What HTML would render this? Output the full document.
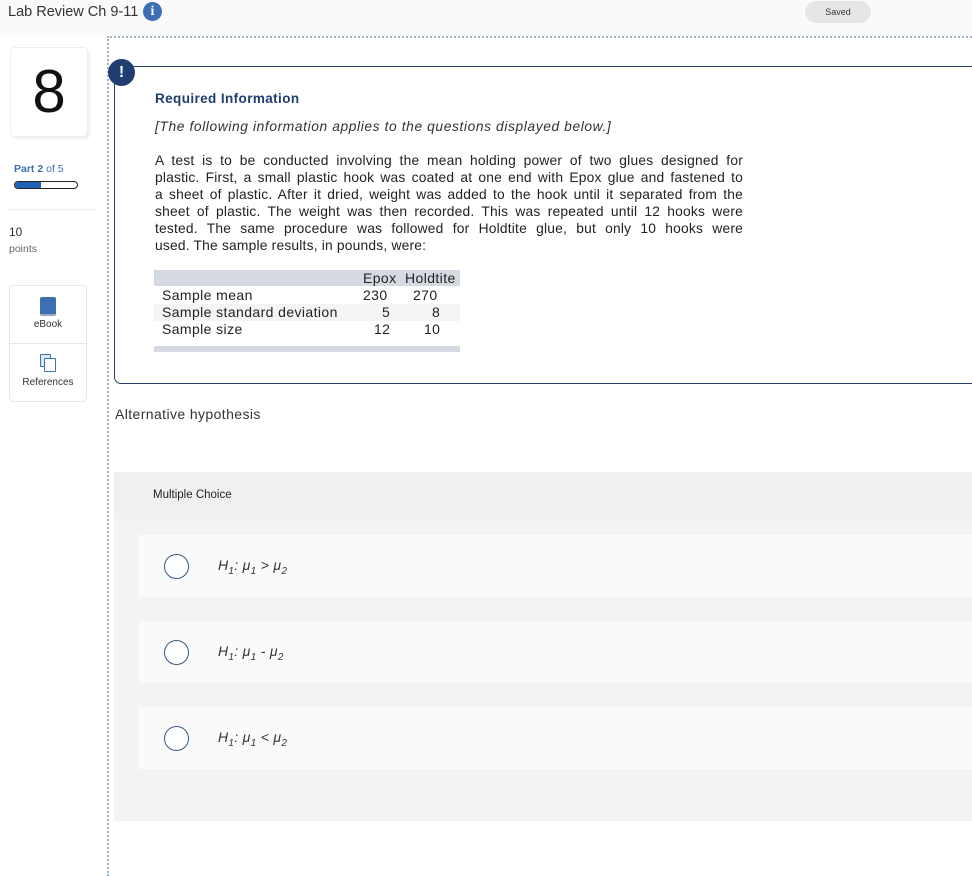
<!DOCTYPE html>
<html><head><meta charset="utf-8"><style>
*{margin:0;padding:0;box-sizing:border-box}
body{width:972px;height:875px;background:#fff;font-family:"Liberation Sans",sans-serif;color:#222;position:relative;overflow:hidden}
.a{position:absolute}
.hdr{left:0;top:0;width:972px;height:36px;background:#fafafa}
.body{font-size:13.8px;line-height:17px;color:#222;letter-spacing:.2px}
.body div{text-align:justify;text-align-last:justify;white-space:nowrap;height:17px}
.body div.l{text-align-last:left}
.opt{left:138px;width:834px;height:62px;background:#fafafa}
.rad{left:26px;top:19px;width:25px;height:25px;border:1.5px solid #3a5a80;border-radius:50%;background:#fff}
.ot{left:80px;top:22px;font-style:italic;font-size:14px;letter-spacing:.3px;color:#333}
.ot sub{font-size:10px}
.tb span{white-space:nowrap}
</style></head><body>
<div class="a hdr"></div>
<div class="a" style="left:8px;top:4px;font-size:14.5px;color:#333">Lab Review Ch 9-11</div>
<div class="a" style="left:143px;top:2px;width:19px;height:19px;border-radius:50%;background:#3c6fb6;color:#fff;font:bold 14px 'Liberation Serif',serif;text-align:center;line-height:19px">i</div>
<div class="a" style="left:805px;top:1px;width:66px;height:22px;border-radius:11px;background:#e6e6e6;font-size:9px;text-align:center;line-height:22px;color:#333">Saved</div>
<div class="a" style="left:107px;top:36px;width:865px;border-top:2px dotted #9fb2c6"></div>
<div class="a" style="left:107px;top:36px;height:840px;border-left:2px dotted #9fb2c6"></div>

<div class="a" style="left:10px;top:47px;width:78px;height:90px;border:1px solid #eee;border-radius:5px;box-shadow:2px 2px 2px #eee;font-size:60px;text-align:center;line-height:88px;color:#111">8</div>
<div class="a" style="left:14px;top:163px;font-size:10.5px;color:#3c6fb6"><b>Part 2</b> of 5</div>
<div class="a" style="left:14px;top:181px;width:64px;height:8px;border:1.5px solid #222;border-radius:4px;overflow:hidden"><div style="width:26px;height:100%;background:#1d62b5"></div></div>
<div class="a" style="left:8px;top:209px;width:88px;border-top:1px solid #eee"></div>
<div class="a" style="left:9px;top:225px;font-size:12px;color:#333">10</div>
<div class="a" style="left:9px;top:243px;font-size:10.5px;color:#666">points</div>
<div class="a" style="left:9px;top:285px;width:78px;height:117px;border:1px solid #e8e8e8;border-radius:4px"></div>
<div class="a" style="left:9px;top:343px;width:78px;border-top:1px solid #e8e8e8"></div>
<div class="a" style="left:40px;top:297px;width:16px;height:19px;background:#3c6fb6;border-radius:2px;border-bottom:2px solid #9ab"></div>
<div class="a" style="left:9px;top:319px;width:78px;text-align:center;font-size:10px;color:#333">eBook</div>
<div class="a" style="left:40px;top:354px;width:11px;height:13px;border:1.5px solid #3c6fb6;border-radius:1px;background:#dde8f5"></div>
<div class="a" style="left:44px;top:358px;width:12px;height:14px;border:1.5px solid #3c6fb6;border-radius:1px;background:#fff"></div>
<div class="a" style="left:9px;top:377px;width:78px;text-align:center;font-size:10px;color:#333">References</div>

<div class="a" style="left:114px;top:66px;width:870px;height:318px;border:1.5px solid #2a3f66;border-radius:7px"></div>
<div class="a" style="left:108px;top:59px;width:27px;height:27px;border-radius:50%;background:#1f3d6e;color:#fff;font-weight:bold;font-size:16px;text-align:center;line-height:27px">!</div>
<div class="a" style="left:155px;top:91px;font-weight:bold;font-size:13.5px;letter-spacing:.4px;color:#1f3d6e">Required Information</div>
<div class="a" style="left:155px;top:119px;font-style:italic;font-size:13.8px;letter-spacing:.6px;color:#333">[The following information applies to the questions displayed below.]</div>
<div class="a body" style="left:155px;top:152px;width:588px">
<div>A test is to be conducted involving the mean holding power of two glues designed for</div>
<div>plastic. First, a small plastic hook was coated at one end with Epox glue and fastened to</div>
<div>a sheet of plastic. After it dried, weight was added to the hook until it separated from the</div>
<div>sheet of plastic. The weight was then recorded. This was repeated until 12 hooks were</div>
<div>tested. The same procedure was followed for Holdtite glue, but only 10 hooks were</div>
<div class="l">used. The sample results, in pounds, were:</div>
</div>
<div class="a" style="left:154px;top:270px;width:306px;height:16px;background:#d5d9e1"></div>
<div class="a" style="left:154px;top:304px;width:306px;height:17px;background:#f4f4f4"></div>
<div class="a" style="left:154px;top:346px;width:306px;height:6px;background:#d5d9e1"></div>
<div class="a tb" style="left:154px;top:270px;width:306px;font-size:14px;letter-spacing:.4px;line-height:17px;color:#222">
<div style="position:relative;height:17px"><span class="a" style="left:209px">Epox</span><span class="a" style="left:251px">Holdtite</span></div>
<div style="position:relative;height:17px"><span class="a" style="left:8px">Sample mean</span><span class="a" style="left:209px">230</span><span class="a" style="left:259px">270</span></div>
<div style="position:relative;height:17px"><span class="a" style="left:8px">Sample standard deviation</span><span class="a" style="left:228px">5</span><span class="a" style="left:278px">8</span></div>
<div style="position:relative;height:17px"><span class="a" style="left:8px">Sample size</span><span class="a" style="left:220px">12</span><span class="a" style="left:270px">10</span></div>
</div>
<div class="a" style="left:115px;top:406px;font-size:14px;letter-spacing:.4px;color:#333">Alternative hypothesis</div>

<div class="a" style="left:114px;top:472px;width:858px;height:349px;background:#f0f0f0"></div>
<div class="a" style="left:153px;top:489px;font-size:11.5px;color:#222">Multiple Choice</div>
<div class="a" style="left:114px;top:519px;width:858px;height:302px;background:#f3f3f3"></div>
<div class="a opt" style="top:535px"><div class="a rad"></div><div class="a ot">H<sub>1</sub>: μ<sub>1</sub> &gt; μ<sub>2</sub></div></div>
<div class="a opt" style="top:621px"><div class="a rad"></div><div class="a ot">H<sub>1</sub>: μ<sub>1</sub> - μ<sub>2</sub></div></div>
<div class="a opt" style="top:707px"><div class="a rad"></div><div class="a ot">H<sub>1</sub>: μ<sub>1</sub> &lt; μ<sub>2</sub></div></div>
</body></html>
